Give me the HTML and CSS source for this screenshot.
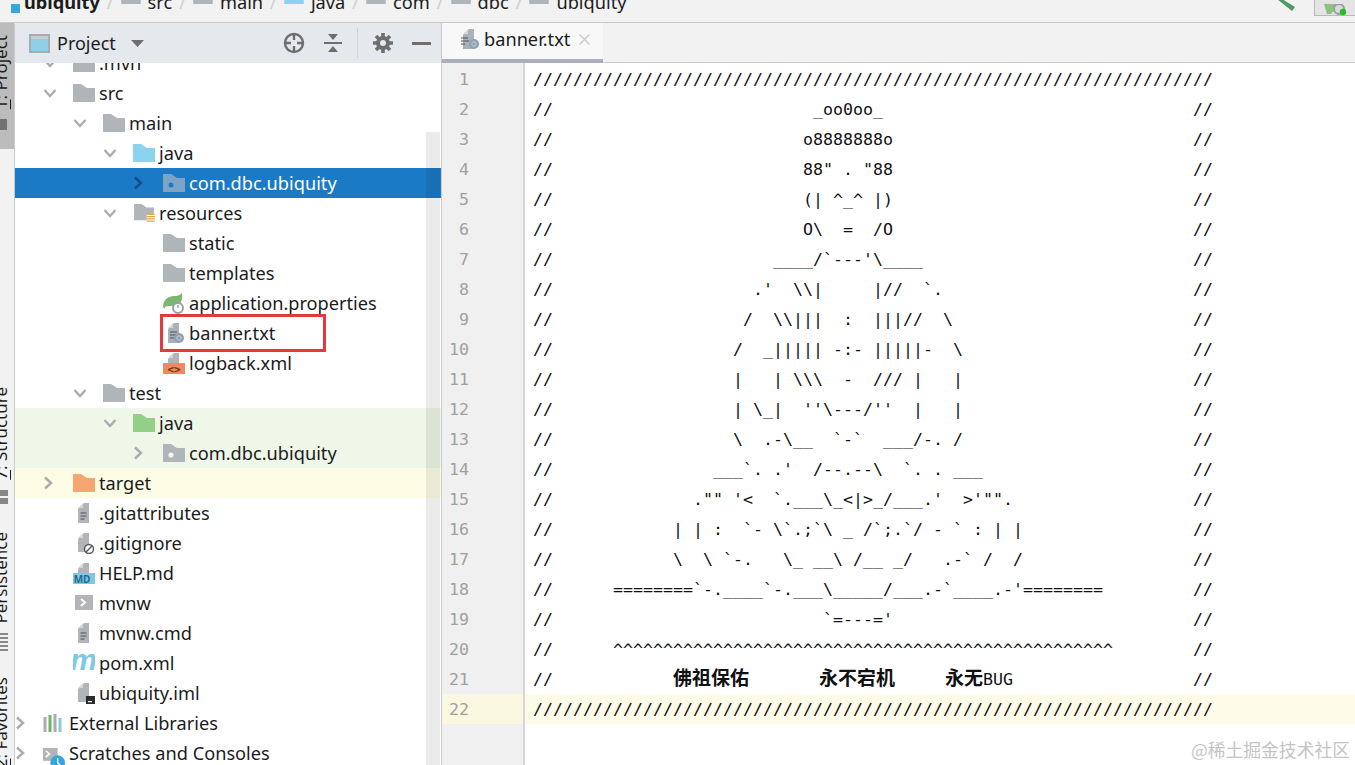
FILE: index.html
```html
<!DOCTYPE html>
<html lang="en">
<head>
  <meta charset="UTF-8">
  <meta name="viewport" content="width=device-width, initial-scale=1.0">
  <title>banner.txt - ubiquity</title>
  <link rel="stylesheet" href="styles.css">
</head>
<body>
  <svg class="sprite" width="0" height="0">
    <symbol id="folder" viewBox="0 0 22 18"><path d="M0 0h8l6 4h8v14H0z"/></symbol>
    <symbol id="down" viewBox="0 0 14 14"><path d="M1.500 4l5.500 6 5.500-6" fill="none" stroke="#a9adaf" stroke-width="2.400"/></symbol>
    <symbol id="right" viewBox="0 0 14 14"><path d="M2 1.500l6 5.500-6 5.500" fill="none" stroke="#a9adaf" stroke-width="2.400"/></symbol>
    <symbol id="doc-lines" viewBox="0 0 22 22"><path d="M5 7l6-6h5v20H5z" fill="#b1b5b9"/><path d="M5 6l5-5v5z" fill="#d5d7d9"/><path d="M7.500 11h6M7.500 14h6M7.500 17h4" stroke="#4d5256" stroke-width="1.200"/></symbol>
  </svg>

  <div class="topbar">
    <div class="crumb crumb-root">
      <span class="module-mark"></span>
      <b>ubiquity</b>
    </div>
    <span class="slash">/</span>
    <div class="crumb"><svg class="ico-folder gray"><use href="#folder"/></svg>src</div>
    <span class="slash">/</span>
    <div class="crumb"><svg class="ico-folder gray"><use href="#folder"/></svg>main</div>
    <span class="slash">/</span>
    <div class="crumb"><svg class="ico-folder blue"><use href="#folder"/></svg>java</div>
    <span class="slash">/</span>
    <div class="crumb"><svg class="ico-folder gray"><use href="#folder"/></svg>com</div>
    <span class="slash">/</span>
    <div class="crumb"><svg class="ico-folder gray"><use href="#folder"/></svg>dbc</div>
    <span class="slash">/</span>
    <div class="crumb"><svg class="ico-folder gray"><use href="#folder"/></svg>ubiquity</div>
    <div class="top-actions">
      <svg class="hammer" width="22" height="12" viewBox="0 0 22 12"><path d="M2 -1h5l13 8-3 4z" fill="#4e9a63"/></svg>
      <div class="run-config">
        <svg width="32" height="15" viewBox="0 0 32 15"><path d="M1 0h12v4l-5 6H4z" fill="#8cc27f"/><circle cx="16" cy="5" r="5" fill="#d8dadb" stroke="#9a9fa3" stroke-width="2"/><circle cx="20" cy="8" r="3.200" fill="#1fc01f"/></svg>
      </div>
    </div>
  </div>

  <div class="workspace">
    <div class="strip">
      <div class="tool tool-project">
        <span class="tool-label"><u>1</u>: Project</span>
        <span class="tool-mark mark-square"></span>
      </div>
      <div class="tool tool-structure">
        <span class="tool-label"><u>7</u>: Structure</span>
        <span class="tool-mark mark-grid"></span>
      </div>
      <div class="tool tool-persist">
        <span class="tool-label">Persistence</span>
        <span class="tool-mark mark-bars"></span>
      </div>
      <div class="tool tool-fav">
        <span class="tool-label"><u>2</u>: Favorites</span>
      </div>
    </div>

    <div class="project">
      <div class="project-head">
        <svg class="window-ico" width="21" height="19" viewBox="0 0 21 19"><rect x="1" y="1" width="19" height="17" fill="#8ed0ea" stroke="#a6abb0" stroke-width="2"/><rect x="2" y="2" width="17" height="3" fill="#c9ccd0"/></svg>
        <span class="project-title">Project</span>
        <svg class="caret" width="13" height="7" viewBox="0 0 13 7"><path d="M0 0h13L6.500 7z" fill="#6e6e6e"/></svg>
        <div class="head-actions">
          <svg width="22" height="22" viewBox="0 0 22 22"><circle cx="11" cy="11" r="9" fill="none" stroke="#6e6e6e" stroke-width="2.400"/><path d="M11 1v7M11 14v7M1 11h7M14 11h7" stroke="#6e6e6e" stroke-width="2.400"/></svg>
          <svg class="collapse" width="20" height="20" viewBox="0 0 20 20"><path d="M1 10h18" stroke="#6e6e6e" stroke-width="2"/><path d="M5 1h10l-5 6zM5 19h10l-5-6z" fill="#6e6e6e"/></svg>
          <span class="head-sep"></span>
          <svg class="gear" width="20" height="20" viewBox="0 0 20 20"><circle cx="10" cy="10" r="5" fill="none" stroke="#6e6e6e" stroke-width="4"/><path d="M10 0v5M10 15v5M0 10h5M15 10h5M3 3l3.500 3.500M13.500 13.500L17 17M17 3l-3.500 3.500M6.500 13.500L3 17" stroke="#6e6e6e" stroke-width="3.600"/></svg>
          <svg class="minimize" width="19" height="3" viewBox="0 0 19 3"><rect width="19" height="3" fill="#6e6e6e"/></svg>
        </div>
      </div>

      <div class="tree">
        <div class="row d1 first"><svg class="arrow"><use href="#down"/></svg><svg class="ico-folder gray"><use href="#folder"/></svg><span>.mvn</span></div>
        <div class="row d1"><svg class="arrow"><use href="#down"/></svg><svg class="ico-folder gray"><use href="#folder"/></svg><span>src</span></div>
        <div class="row d2"><svg class="arrow"><use href="#down"/></svg><svg class="ico-folder gray"><use href="#folder"/></svg><span>main</span></div>
        <div class="row d3"><svg class="arrow"><use href="#down"/></svg><svg class="ico-folder blue"><use href="#folder"/></svg><span>java</span></div>
        <div class="row d4 selected">
          <svg class="arrow" viewBox="0 0 14 14"><path d="M2 1.500l6 5.500-6 5.500" fill="none" stroke="#0d4f8b" stroke-width="2.400"/></svg>
          <svg class="ico-folder" viewBox="0 0 22 18"><path d="M0 0h8l6 4h8v14H0z" fill="#7fa3c4"/><circle cx="8" cy="11" r="2.500" fill="#1a7ac6"/></svg>
          <span>com.dbc.ubiquity</span>
        </div>
        <div class="row d3"><svg class="arrow"><use href="#down"/></svg>
          <svg class="ico-folder" viewBox="0 0 22 20"><path d="M0 0h8l6 4h8v7h-8v7H0z" fill="#b0b5ba"/><path d="M14 11.500h9M14 14h9M14 16.500h9M14 19h9" stroke="#e2a83f" stroke-width="1.500"/></svg>
          <span>resources</span>
        </div>
        <div class="row d4 leaf"><svg class="ico-folder gray"><use href="#folder"/></svg><span>static</span></div>
        <div class="row d4 leaf"><svg class="ico-folder gray"><use href="#folder"/></svg><span>templates</span></div>
        <div class="row d4 leaf">
          <svg class="ico-file" viewBox="0 0 22 22"><path d="M0 14C1 6 7 4 12 4c3 0 5-1 7-3 1 6-1 11-5 13H5c-2 0-3 1-4 3z" fill="#7cb66f"/><circle cx="15" cy="16" r="5" fill="#fff" stroke="#9aa0a5" stroke-width="2"/><path d="M15 13v3" stroke="#9aa0a5" stroke-width="1.500"/></svg>
          <span>application.properties</span>
        </div>
        <div class="row d4 leaf">
          <svg class="ico-file" viewBox="0 0 22 22"><path d="M5 7l6-6h5v20H5z" fill="#aab1b8"/><path d="M5 6l5-5v5z" fill="#d5d7d9"/><path d="M7 10h7M7 13h8M7 16h4" stroke="#4d5256" stroke-width="1.200"/><circle cx="16" cy="16" r="5" fill="#8ea0b3"/><circle cx="16" cy="16" r="2.200" fill="none" stroke="#c8d0d8"/></svg>
          <span>banner.txt</span>
        </div>
        <div class="row d4 leaf">
          <svg class="ico-file" viewBox="0 0 22 22"><path d="M5 7l6-6h5v12H5z" fill="#b1b5b9"/><path d="M5 6l5-5v5z" fill="#d5d7d9"/><rect y="11" width="22" height="11" fill="#ee8a5e"/><text x="11" y="20.500" class="xml-mark">&lt;&gt;</text></svg>
          <span>logback.xml</span>
        </div>
        <div class="row d2"><svg class="arrow"><use href="#down"/></svg><svg class="ico-folder gray"><use href="#folder"/></svg><span>test</span></div>
        <div class="row d3 tested"><svg class="arrow"><use href="#down"/></svg><svg class="ico-folder green"><use href="#folder"/></svg><span>java</span></div>
        <div class="row d4 tested">
          <svg class="arrow"><use href="#right"/></svg>
          <svg class="ico-folder" viewBox="0 0 22 18"><path d="M0 0h8l6 4h8v14H0z" fill="#b0b5ba"/><circle cx="8" cy="11" r="2.600" fill="#eef7e8"/></svg>
          <span>com.dbc.ubiquity</span>
        </div>
        <div class="row d1 excluded"><svg class="arrow"><use href="#right"/></svg><svg class="ico-folder orange"><use href="#folder"/></svg><span>target</span></div>
        <div class="row d2 leaf top-file"><svg class="ico-file"><use href="#doc-lines"/></svg><span>.gitattributes</span></div>
        <div class="row d2 leaf top-file">
          <svg class="ico-file" viewBox="0 0 22 22"><path d="M5 7l6-6h5v19H5z" fill="#b1b5b9"/><path d="M5 6l5-5v5z" fill="#d5d7d9"/><circle cx="16" cy="17" r="4.500" fill="#fff" stroke="#555a5e" stroke-width="1.500"/><path d="M13 20l6-6" stroke="#555a5e" stroke-width="1.500"/></svg>
          <span>.gitignore</span>
        </div>
        <div class="row d2 leaf top-file">
          <svg class="ico-file" viewBox="0 0 22 22"><path d="M5 7l6-6h5v12H5z" fill="#b1b5b9"/><path d="M5 6l5-5v5z" fill="#d5d7d9"/><rect y="11" width="23" height="11" fill="#7ec8e3"/><text x="9" y="20.500" class="md-mark">MD</text></svg>
          <span>HELP.md</span>
        </div>
        <div class="row d2 leaf top-file">
          <svg class="ico-file" viewBox="0 0 22 22"><rect x="2" y="3" width="18" height="15" fill="#b1b5b9"/><path d="M8 7l4 3.500-4 3.500" fill="none" stroke="#fff" stroke-width="2"/></svg>
          <span>mvnw</span>
        </div>
        <div class="row d2 leaf top-file"><svg class="ico-file"><use href="#doc-lines"/></svg><span>mvnw.cmd</span></div>
        <div class="row d2 leaf top-file">
          <svg class="ico-file" viewBox="0 0 22 22"><text x="10.500" y="18" class="pom-mark">m</text></svg>
          <span>pom.xml</span>
        </div>
        <div class="row d2 leaf top-file">
          <svg class="ico-file" viewBox="0 0 22 22"><path d="M5 7l6-6h5v19H5z" fill="#b1b5b9"/><path d="M5 6l5-5v5z" fill="#d5d7d9"/><rect x="13" y="14" width="9" height="8" fill="#2b2b2b"/><rect x="15" y="19" width="4" height="1.200" fill="#fff"/></svg>
          <span>ubiquity.iml</span>
        </div>
        <div class="row d0">
          <svg class="arrow"><use href="#right"/></svg>
          <svg class="ico-folder" viewBox="0 0 22 18"><path d="M2 3v15" stroke="#a9adaf" stroke-width="3"/><path d="M7 1v17" stroke="#72b45f" stroke-width="3"/><path d="M12 0v18" stroke="#a9adaf" stroke-width="3"/><path d="M17 4v14" stroke="#8cc8e6" stroke-width="3"/></svg>
          <span>External Libraries</span>
        </div>
        <div class="row d0">
          <svg class="arrow"><use href="#right"/></svg>
          <svg class="ico-folder scratch" viewBox="0 0 24 24"><rect width="16" height="14" fill="#b1b5b9"/><path d="M3 3l4 3.500-4 3.500" fill="none" stroke="#fff" stroke-width="1.800"/><circle cx="16" cy="16" r="8" fill="#35a7dc"/><path d="M16 11v5l3 3" fill="none" stroke="#fff" stroke-width="1.500"/></svg>
          <span>Scratches and Consoles</span>
        </div>
      </div>

      <div class="tree-scrollbar"></div>
      <div class="callout"></div>
    </div>

    <div class="editor">
      <div class="tabs">
        <div class="tab">
          <svg class="ico-file" viewBox="0 0 22 22"><path d="M5 7l6-6h5v20H5z" fill="#aab1b8"/><path d="M5 6l5-5v5z" fill="#d5d7d9"/><path d="M3 10h7M3 13h8M3 16h4" stroke="#4d5256" stroke-width="1.200"/><circle cx="16" cy="16" r="5" fill="#8ea0b3"/><circle cx="16" cy="16" r="2.200" fill="none" stroke="#c8d0d8"/></svg>
          <span>banner.txt</span>
          <svg class="tab-close" width="11" height="11" viewBox="0 0 11 11"><path d="M0.500 0.500l10 10M10.500 0.500l-10 10" stroke="#c4c7ca" stroke-width="1.200"/></svg>
        </div>
      </div>
      <div class="editor-body">
        <div class="gutter">
          <div class="num">1</div>
          <div class="num">2</div>
          <div class="num">3</div>
          <div class="num">4</div>
          <div class="num">5</div>
          <div class="num">6</div>
          <div class="num">7</div>
          <div class="num">8</div>
          <div class="num">9</div>
          <div class="num">10</div>
          <div class="num">11</div>
          <div class="num">12</div>
          <div class="num">13</div>
          <div class="num">14</div>
          <div class="num">15</div>
          <div class="num">16</div>
          <div class="num">17</div>
          <div class="num">18</div>
          <div class="num">19</div>
          <div class="num">20</div>
          <div class="num">21</div>
          <div class="num current">22</div>
        </div>
        <div class="code">
          <div class="line">////////////////////////////////////////////////////////////////////</div>
          <div class="line">//                          _oo0oo_                               //</div>
          <div class="line">//                         o8888888o                              //</div>
          <div class="line">//                         88" . "88                              //</div>
          <div class="line">//                         (| ^_^ |)                              //</div>
          <div class="line">//                         O\  =  /O                              //</div>
          <div class="line">//                      ____/`---'\____                           //</div>
          <div class="line">//                    .'  \\|     |//  `.                         //</div>
          <div class="line">//                   /  \\|||  :  |||//  \                        //</div>
          <div class="line">//                  /  _||||| -:- |||||-  \                       //</div>
          <div class="line">//                  |   | \\\  -  /// |   |                       //</div>
          <div class="line">//                  | \_|  ''\---/''  |   |                       //</div>
          <div class="line">//                  \  .-\__  `-`  ___/-. /                       //</div>
          <div class="line">//                ___`. .'  /--.--\  `. . ___                     //</div>
          <div class="line">//              ."" '&lt;  `.___\_&lt;|&gt;_/___.'  &gt;'"".                  //</div>
          <div class="line">//            | | :  `- \`.;`\ _ /`;.`/ - ` : | |                 //</div>
          <div class="line">//            \  \ `-.   \_ __\ /__ _/   .-` /  /                 //</div>
          <div class="line">//      ========`-.____`-.___\_____/___.-`____.-'========         //</div>
          <div class="line">//                           `=---='                              //</div>
          <div class="line">//      ^^^^^^^^^^^^^^^^^^^^^^^^^^^^^^^^^^^^^^^^^^^^^^^^^^        //</div>
          <div class="line">//            <span class="cjk">佛祖保佑</span>       <span class="cjk">永不宕机</span>     <span class="cjk">永无</span>BUG                  //</div>
          <div class="line current">////////////////////////////////////////////////////////////////////</div>
        </div>
        <div class="watermark">@稀土掘金技术社区</div>
      </div>
    </div>
  </div>
</body>
</html>
```

FILE: styles.css
```css
* {
  box-sizing: border-box;
}
html, body {
  margin: 0;
  height: 100%;
  overflow: hidden;
}
body {
  font-family: "Noto Sans", "Noto Sans CJK SC", sans-serif;
  font-size: 18.2px;
  color: #1c1c1c;
  background: #f2f2f2;
  display: flex;
  flex-direction: column;
}
.sprite {
  position: absolute;
}

/* top breadcrumb, cut off by the screenshot */
.topbar {
  height: 23px;
  flex: none;
  display: flex;
  align-items: center;
  padding: 0 0 0 11px;
  gap: 7px;
  background: #f2f2f2;
  border-bottom: 1px solid #c9c9c9;
  overflow: hidden;
}
.crumb {
  display: flex;
  align-items: center;
  gap: 7px;
  line-height: 30px;
  margin-top: -18px;
}
.crumb .ico-folder {
  width: 20px;
  height: 16px;
  margin-top: -13px;
  margin-right: 0;
}
.crumb-root {
  gap: 4px;
}
.crumb-root b {
  font-weight: 700;
}
.module-mark {
  width: 9px;
  height: 9px;
  margin-top: 13px;
  background: #35a7dc;
}
.slash {
  color: #cfcfcf;
  margin-top: -18px;
}
.top-actions {
  margin-left: auto;
  display: flex;
  align-items: flex-start;
  gap: 17px;
  align-self: flex-start;
}
.run-config {
  width: 41px;
  height: 16px;
  padding-left: 8px;
  background: #e4e4e4;
  border: 1px solid #b8b8b8;
  border-top: none;
  border-right: none;
}

.workspace {
  flex: 1;
  min-height: 0;
  display: flex;
}

/* left tool window strip */
.strip {
  width: 15px;
  flex: none;
  display: flex;
  flex-direction: column;
  background: #f2f2f2;
  border-right: 1px solid #c9c9c9;
  overflow: hidden;
}
.tool {
  display: flex;
  flex-direction: column;
  align-items: flex-start;
  flex: none;
}
.tool-label {
  writing-mode: vertical-rl;
  transform: rotate(180deg);
  font-size: 17px;
  line-height: 20px;
  margin-left: -9px;
  white-space: nowrap;
}
.tool-mark {
  display: block;
  margin-top: 10px;
}
.tool-project {
  height: 126px;
  padding-top: 12px;
  background: #bcbcbc;
}
.tool-structure {
  margin-top: 238px;
}
.tool-persist {
  margin-top: 28px;
}
.tool-fav {
  margin-top: 26px;
}
.mark-square {
  width: 7px;
  height: 11px;
  background: #737373;
}
.mark-grid {
  width: 8px;
  height: 14px;
  background: repeating-linear-gradient(#888 0 6px, transparent 6px 8px);
}
.mark-bars {
  width: 8px;
  height: 18px;
  background: repeating-linear-gradient(#8a8a8a 0 2px, transparent 2px 4px);
}

/* project panel */
.project {
  position: relative;
  width: 427px;
  flex: none;
  display: flex;
  flex-direction: column;
  background: #fff;
  border-right: 1px solid #c9c9c9;
  overflow: hidden;
}
.project-head {
  position: relative;
  z-index: 2;
  height: 40px;
  flex: none;
  display: flex;
  align-items: center;
  padding: 0 10px 0 14px;
  background: #e5e8ec;
}
.project-title {
  margin-left: 7px;
  font-size: 18px;
}
.caret {
  margin-left: 15px;
}
.head-actions {
  margin-left: auto;
  display: flex;
  align-items: center;
}
.collapse {
  margin-left: 18px;
}
.head-sep {
  width: 1px;
  height: 30px;
  margin: 0 15px 0 14px;
  background: #d0d2d5;
}
.minimize {
  margin-left: 19px;
}

.tree {
  flex: 1;
  min-height: 0;
}
.row {
  height: 30px;
  display: flex;
  align-items: center;
  white-space: nowrap;
}
.row.first {
  margin-top: -15px;
}
.d0 { padding-left: 0; }
.d1 { padding-left: 30px; }
.d2 { padding-left: 60px; }
.d3 { padding-left: 90px; }
.d4 { padding-left: 120px; }
.leaf { padding-left: 148px; }
.top-file { padding-left: 58px; }
.arrow {
  width: 14px;
  height: 14px;
  margin-left: -2px;
  margin-right: 16px;
  flex: none;
}
.d0 .arrow {
  margin-left: 0;
  margin-right: 14px;
}
.ico-folder {
  width: 22px;
  height: 18px;
  flex: none;
  margin-right: 4px;
}
.ico-file {
  width: 22px;
  height: 22px;
  flex: none;
  margin-right: 4px;
}
.gray { fill: #b0b5ba; }
.blue { fill: #8cd3ee; }
.green { fill: #93cf87; }
.orange { fill: #f7a673; }
.scratch {
  height: 24px;
  margin-top: 6px;
  margin-bottom: -6px;
}
.selected {
  background: #1a7ac6;
  color: #fff;
}
.tested {
  background: #eef7e8;
}
.excluded {
  background: #fdfde6;
}
.xml-mark {
  font-family: "DejaVu Sans Mono", monospace;
  font-size: 11px;
  font-weight: 700;
  text-anchor: middle;
  fill: #7a3310;
}
.md-mark {
  font-family: "Noto Sans", sans-serif;
  font-size: 10px;
  font-weight: 700;
  text-anchor: middle;
  fill: #1d6b8c;
}
.pom-mark {
  font-family: "Liberation Sans", sans-serif;
  font-size: 30px;
  font-weight: 700;
  font-style: italic;
  text-anchor: middle;
  fill: #7ec8e3;
}
.tree-scrollbar {
  position: absolute;
  top: 109px;
  bottom: 0;
  right: 1px;
  width: 14px;
  background: rgba(0, 0, 0, 0.08);
}
.callout {
  position: absolute;
  left: 145px;
  top: 291px;
  width: 166px;
  height: 38px;
  border: 3px solid #e5383b;
}

/* editor */
.editor {
  flex: 1;
  min-width: 0;
  display: flex;
  flex-direction: column;
  background: #fff;
}
.tabs {
  height: 40px;
  flex: none;
  background: #f2f2f2;
  border-bottom: 1px solid #c9c9c9;
}
.tab {
  width: 161px;
  height: 40px;
  display: flex;
  align-items: center;
  padding: 0 0 4px 16px;
  background: #f8f8f8;
  border-bottom: 4px solid #a8b0c0;
}
.tab .ico-file {
  margin-right: 4px;
}
.tab-close {
  margin-left: 9px;
}
.editor-body {
  position: relative;
  flex: 1;
  min-height: 0;
  display: flex;
  font-family: "DejaVu Sans Mono", monospace;
  font-size: 16.61px;
  line-height: 32px;
}
.gutter {
  width: 83px;
  flex: none;
  padding-top: 1px;
  background: #f0f0f0;
  border-right: 2px solid #d6d6d6;
}
.num {
  height: 30px;
  padding-right: 54px;
  text-align: right;
  color: #a0a0a0;
}
.num.current {
  background: #fbf8e2;
}
.code {
  flex: 1;
  min-width: 0;
  padding-top: 1px;
}
.line {
  height: 30px;
  padding-left: 8px;
  white-space: pre;
  color: #111;
}
.line.current {
  background: #fffbe9;
}
.cjk {
  font-family: "Noto Sans CJK SC", sans-serif;
  font-size: 19px;
  font-weight: 700;
  line-height: 1;
}
.watermark {
  position: absolute;
  right: 5px;
  bottom: 4px;
  font-family: "Noto Sans CJK SC", sans-serif;
  font-size: 17.8px;
  line-height: 24px;
  color: #c4c4c4;
}
```
